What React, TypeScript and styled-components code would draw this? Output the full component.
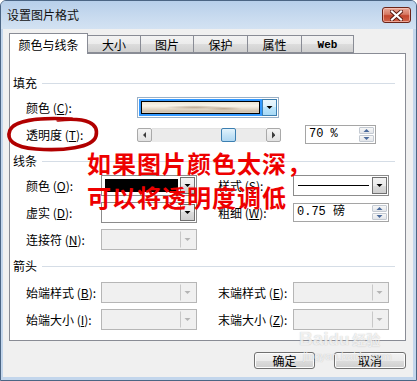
import styled, { createGlobalStyle } from "styled-components";

const UI = `"Noto Sans CJK SC", "Liberation Sans", sans-serif`;
const MONO = `"Liberation Mono", "Noto Sans CJK SC", monospace`;

const GlobalStyle = createGlobalStyle`
  html, body { margin: 0; padding: 0; background: #ffffff; }
  body { font-family: ${UI}; }
  * { box-sizing: border-box; }
`;

// 작은 삼각형 아이콘
const Tri = ({ dir, color, size = 5 }: { dir: "up" | "down" | "left" | "right"; color: string; size?: number }) => {
    const pts = {
        down: "0,0 8,0 4,4",
        up: "0,4 8,4 4,0",
        left: "4,0 4,8 0,4",
        right: "0,0 0,8 4,4",
    }[dir];
    const horizontal = dir === "left" || dir === "right";
    return (
        <svg width={horizontal ? size * 0.5 + 0.5 : size + 2} height={horizontal ? size + 2 : size * 0.5 + 0.5} viewBox={horizontal ? "0 0 4 8" : "0 0 8 4"}>
            <polygon points={pts} fill={color} />
        </svg>
    );
};

const App = () => {
    return (
        <>
            <GlobalStyle />
            <Window>
                <TitleBar>
                    <Title>设置图片格式</Title>
                    <CloseBtn>
                        <svg width="13" height="11" viewBox="0 0 13 11">
                            <path d="M2 1.5 L11 9.5 M11 1.5 L2 9.5" stroke="#5a1a10" strokeWidth="4" strokeLinecap="square" />
                            <path d="M2 1.5 L11 9.5 M11 1.5 L2 9.5" stroke="#ffffff" strokeWidth="2.2" strokeLinecap="square" />
                        </svg>
                    </CloseBtn>
                </TitleBar>
                <Client>
                    <TabRow>
                        <Tab $active $w={79}>颜色与线条</Tab>
                        <Tab $w={54}>大小</Tab>
                        <Tab $w={54}>图片</Tab>
                        <Tab $w={55}>保护</Tab>
                        <Tab $w={55}>属性</Tab>
                        <Tab $w={53} $mono>Web</Tab>
                    </TabRow>
                    <Panel>
                        {/* 填充 */}
                        <Heading>填充</Heading>
                        <Rows $top={7}>
                            <FillRow>
                                <Label>颜色 (<u>C</u>):</Label>
                                <ComboBox $w={142} $focused>
                                    <ComboField $pad={2} $bg="#3399ff">
                                        <Swatch />
                                    </ComboField>
                                    <DropButton $kind="blue"><Tri dir="down" color="#000" /></DropButton>
                                </ComboBox>
                            </FillRow>
                            <FillRow>
                                <Label>透明度 (<u>T</u>):</Label>
                                <Slider>
                                    <SlideBtn><Tri dir="left" color="#3c3c3c" size={6} /></SlideBtn>
                                    <Track>
                                        <Thumb style={{ marginLeft: 69 }} />
                                    </Track>
                                    <SlideBtn><Tri dir="right" color="#3c3c3c" size={6} /></SlideBtn>
                                </Slider>
                                <span />
                                <SpinBox $w={71}>
                                    <SpinText>70 %</SpinText>
                                    <SpinButtons>
                                        <SpinHalf><Tri dir="up" color="#4a6a9c" /></SpinHalf>
                                        <SpinHalf><Tri dir="down" color="#4a6a9c" /></SpinHalf>
                                    </SpinButtons>
                                </SpinBox>
                            </FillRow>
                        </Rows>

                        {/* 线条 */}
                        <Heading $top={9}>线条</Heading>
                        <Rows $top={7}>
                            <LineRow>
                                <Label>颜色 (<u>O</u>):</Label>
                                <ComboBox $w={96}>
                                    <ComboField $pad={2} $bg="#ffffff">
                                        <BlackFill />
                                    </ComboField>
                                    <DropButton $kind="gray"><Tri dir="down" color="#000" /></DropButton>
                                </ComboBox>
                                <span />
                                <Label>样式 (<u>S</u>):</Label>
                                <ComboBox $w={96}>
                                    <ComboField $pad={3} $bg="#ffffff">
                                        <LineSample />
                                    </ComboField>
                                    <DropButton $kind="gray"><Tri dir="down" color="#000" /></DropButton>
                                </ComboBox>
                            </LineRow>
                            <LineRow>
                                <Label>虚实 (<u>D</u>):</Label>
                                <ComboBox $w={96}>
                                    <ComboField $pad={2} $bg="#ffffff" />
                                    <DropButton $kind="gray"><Tri dir="down" color="#000" /></DropButton>
                                </ComboBox>
                                <span />
                                <Label>粗细 (<u>W</u>):</Label>
                                <SpinBox $w={96}>
                                    <SpinText>0.75 磅</SpinText>
                                    <SpinButtons>
                                        <SpinHalf><Tri dir="up" color="#4a6a9c" /></SpinHalf>
                                        <SpinHalf><Tri dir="down" color="#4a6a9c" /></SpinHalf>
                                    </SpinButtons>
                                </SpinBox>
                            </LineRow>
                            <LineRow>
                                <Label>连接符 (<u>N</u>):</Label>
                                <ComboBox $w={96} $disabled>
                                    <ComboField $pad={2} $bg="#f0f0f0" />
                                    <DropButton $kind="disabled"><Tri dir="down" color="#b4b4b4" /></DropButton>
                                </ComboBox>
                            </LineRow>
                        </Rows>

                        {/* 箭头 */}
                        <Heading $top={9}>箭头</Heading>
                        <Rows $top={9}>
                            <LineRow>
                                <Label>始端样式 (<u>B</u>):</Label>
                                <ComboBox $w={96} $disabled>
                                    <ComboField $pad={2} $bg="#f0f0f0" />
                                    <DropButton $kind="disabled"><Tri dir="down" color="#b4b4b4" /></DropButton>
                                </ComboBox>
                                <span />
                                <Label>末端样式 (<u>E</u>):</Label>
                                <ComboBox $w={96} $disabled>
                                    <ComboField $pad={2} $bg="#f0f0f0" />
                                    <DropButton $kind="disabled"><Tri dir="down" color="#b4b4b4" /></DropButton>
                                </ComboBox>
                            </LineRow>
                            <LineRow>
                                <Label>始端大小 (<u>I</u>):</Label>
                                <ComboBox $w={96} $disabled>
                                    <ComboField $pad={2} $bg="#f0f0f0" />
                                    <DropButton $kind="disabled"><Tri dir="down" color="#b4b4b4" /></DropButton>
                                </ComboBox>
                                <span />
                                <Label>末端大小 (<u>Z</u>):</Label>
                                <ComboBox $w={96} $disabled>
                                    <ComboField $pad={2} $bg="#f0f0f0" />
                                    <DropButton $kind="disabled"><Tri dir="down" color="#b4b4b4" /></DropButton>
                                </ComboBox>
                            </LineRow>
                        </Rows>
                    </Panel>
                    <ButtonRow>
                        <DialogButton $w={61}>确定</DialogButton>
                        <DialogButton $w={72}>取消</DialogButton>
                    </ButtonRow>
                </Client>

                {/* 붉은 주석 */}
                <Circle width="110" height="50" viewBox="0 114 110 50">
                    <path
                        d="M58 120 C88 117 99 124 96 136 C93 148 62 151 36 149 C13 147 6 140 10 130 C14 121 36 117 72 119"
                        fill="none" stroke="#b10000" strokeWidth="3.6" strokeLinecap="round" />
                </Circle>
                <Note>
                    如果图片颜色太深，<br />
                    可以将透明度调低
                </Note>
                <Watermark>
                    <WmBig>Bai<Paw>du</Paw><WmCn>经验</WmCn></WmBig>
                    <WmSmall>jingyan.baidu.com</WmSmall>
                </Watermark>
            </Window>
        </>
    );
};

export default App;

const Window = styled.div`
    position: relative;
    width: 417px;
    height: 381px;
    display: flex;
    flex-direction: column;
    background: #c3d6ec;
    border: 1px solid #4b6584;
    border-radius: 6px 6px 0 0;
    overflow: hidden;
    font-family: ${UI};
    font-size: 12px;
    color: #000;
`;

const TitleBar = styled.div`
    height: 28px;
    flex: none;
    display: flex;
    align-items: flex-start;
    justify-content: space-between;
    padding-left: 6px;
    background: linear-gradient(#b7cfea, #c9dbef 60%, #d3e2f2);
`;

const Title = styled.div`
    margin-top: 6px;
    font-size: 12px;
    line-height: 16px;
    color: #111;
`;

const CloseBtn = styled.div`
    margin-top: 6px;
    margin-right: 5px;
    width: 29px;
    height: 16px;
    border: 1px solid #6b2418;
    border-radius: 3px;
    background: linear-gradient(#e9a898, #d67a64 45%, #c3462d 55%, #d0654c);
    box-shadow: inset 0 0 0 1px rgba(255, 210, 200, 0.6);
    display: flex;
    align-items: center;
    justify-content: center;
`;

const Client = styled.div`
    flex: 1;
    margin: 0 3px 3px 2px;
    background: #f0f0f0;
    padding: 4px 7px 8px 6px;
    display: flex;
    flex-direction: column;
`;

const TabRow = styled.div`
    height: 20px;
    display: flex;
    align-items: flex-end;
    position: relative;
    z-index: 1;
`;

const Tab = styled.div<{ $active?: boolean; $w: number; $mono?: boolean }>`
    width: ${(p) => p.$w}px;
    height: ${(p) => (p.$active ? 21 : 18)}px;
    margin-bottom: ${(p) => (p.$active ? -1 : 0)}px;
    margin-right: -1px;
    border: 1px solid #898c95;
    border-bottom: ${(p) => (p.$active ? "none" : "1px solid #898c95")};
    background: ${(p) => (p.$active ? "#ffffff" : "linear-gradient(#f3f3f3, #ebebeb 50%, #dddddd 50%, #cfcfcf)")};
    display: flex;
    align-items: center;
    justify-content: center;
    padding-top: ${(p) => (p.$active ? 1 : 1)}px;
    font-family: ${(p) => (p.$mono ? MONO : UI)};
    font-size: ${(p) => (p.$mono ? 11 : 12)}px;
    font-weight: ${(p) => (p.$mono ? 700 : 400)};
    line-height: 14px;
    color: #000;
    position: relative;
    z-index: ${(p) => (p.$active ? 2 : 1)};
`;

const Panel = styled.div`
    height: 288px;
    flex: none;
    background: #ffffff;
    border: 1px solid #898c95;
    padding: 22px 10px 0 3px;
`;

const Heading = styled.div<{ $top?: number }>`
    margin-top: ${(p) => p.$top ?? 0}px;
    height: 14px;
    display: flex;
    align-items: center;
    gap: 5px;
    line-height: 14px;

    &::after {
        content: "";
        flex: 1;
        height: 1px;
        background: #d5dde6;
    }
`;

const Rows = styled.div<{ $top: number }>`
    margin-top: ${(p) => p.$top}px;
    padding-left: 13px;
    display: flex;
    flex-direction: column;
    gap: 6px;
`;

const FillRow = styled.div`
    height: 21px;
    display: grid;
    grid-template-columns: 111px 144px 24px 71px;
    align-items: center;
`;

const LineRow = styled.div`
    height: 21px;
    display: grid;
    grid-template-columns: 75px 96px 21px 75px 96px;
    align-items: center;
`;

const Label = styled.div`
    white-space: nowrap;
    line-height: 21px;
    font-size: 12px;

    u {
        text-decoration-thickness: 1px;
        text-underline-offset: 1px;
    }
`;

const ComboBox = styled.div<{ $w: number; $disabled?: boolean; $focused?: boolean }>`
    width: ${(p) => p.$w}px;
    height: 21px;
    display: flex;
    padding: 1px;
    border: 1px solid ${(p) => (p.$disabled ? "#b6b6b6" : p.$focused ? "#9ab0c6" : "#8c8c8c")};
    background: ${(p) => (p.$disabled ? "#f0f0f0" : "#ffffff")};
`;

const ComboField = styled.div<{ $pad: number; $bg: string }>`
    flex: 1;
    padding: ${(p) => p.$pad}px;
    background: ${(p) => p.$bg};
    display: flex;
    flex-direction: column;
    justify-content: center;
`;

const Swatch = styled.div`
    flex: 1;
    border: 1px solid #000;
    background:
        radial-gradient(ellipse 30px 2px at 45% 48%, rgba(150, 120, 90, 0.55), transparent),
        radial-gradient(ellipse 18px 2px at 70% 60%, rgba(150, 120, 90, 0.5), transparent),
        linear-gradient(#efe6d3, #f9f4ea 35%, #e8ddcc 60%, #cfc1ad 85%, #ddd2c3);
`;

const BlackFill = styled.div`
    flex: 1;
    background: #000;
`;

const LineSample = styled.div`
    height: 1px;
    background: #000;
`;

const DropButton = styled.div<{ $kind: "blue" | "gray" | "disabled" }>`
    width: 15px;
    flex: none;
    display: flex;
    align-items: center;
    justify-content: center;
    border: 1px solid ${(p) => (p.$kind === "blue" ? "#3c7fb1" : p.$kind === "gray" ? "#707070" : "transparent")};
    border-left: 1px solid ${(p) => (p.$kind === "blue" ? "#3c7fb1" : p.$kind === "gray" ? "#707070" : "#c8c8c8")};
    background: ${(p) =>
        p.$kind === "blue"
            ? "linear-gradient(#eaf6fd, #d9f0fc 50%, #bee6fd 50%, #a7d9f5)"
            : p.$kind === "gray"
                ? "linear-gradient(#f2f2f2, #ebebeb 50%, #dddddd 50%, #cfcfcf)"
                : "#f0f0f0"};
`;

const Slider = styled.div`
    width: 144px;
    height: 14px;
    display: flex;
`;

const SlideBtn = styled.div`
    width: 15px;
    height: 14px;
    flex: none;
    border: 1px solid #a9a9a9;
    border-radius: 2px;
    background: linear-gradient(#f4f4f4, #e2e2e2);
    display: flex;
    align-items: center;
    justify-content: center;
`;

const Track = styled.div`
    flex: 1;
    height: 14px;
    background: #ebebeb;
    border-top: 1px solid #e2e2e2;
    display: flex;
    align-items: center;
`;

const Thumb = styled.div`
    width: 15px;
    height: 14px;
    border: 1px solid #3c7fb1;
    border-radius: 2px;
    background: linear-gradient(#e3f3fc, #c6e4f7 50%, #afd7f2);
`;

const SpinBox = styled.div<{ $w: number }>`
    width: ${(p) => p.$w}px;
    height: 19px;
    display: flex;
    border: 1px solid #a5a5a5;
    background: #fff;
    padding: 1px;
`;

const SpinText = styled.div`
    flex: 1;
    padding-left: 2px;
    font-family: ${MONO};
    font-size: 12px;
    line-height: 15px;
    white-space: nowrap;
`;

const SpinButtons = styled.div`
    width: 15px;
    display: flex;
    flex-direction: column;
    gap: 1px;
`;

const SpinHalf = styled.div`
    flex: 1;
    border: 1px solid #c4cad2;
    border-radius: 1px;
    background: linear-gradient(#f7f7f7, #e3e6ea);
    display: flex;
    align-items: center;
    justify-content: center;
`;

const ButtonRow = styled.div`
    margin-top: 11px;
    display: flex;
    justify-content: flex-end;
    gap: 19px;
`;

const DialogButton = styled.button<{ $w: number }>`
    width: ${(p) => p.$w}px;
    height: 17px;
    padding: 0;
    border: 1px solid #707070;
    border-radius: 3px;
    background: linear-gradient(#f2f2f2, #ebebeb 50%, #dddddd 50%, #cfcfcf);
    box-shadow: inset 0 0 0 1px #fcfcfc;
    font-family: ${UI};
    font-size: 12px;
    line-height: 14px;
    color: #000;
`;

const Circle = styled.svg`
    position: absolute;
    left: -1px;
    top: 113px;
    pointer-events: none;
`;

const Note = styled.div`
    position: absolute;
    left: 86px;
    top: 145px;
    font-family: ${UI};
    font-weight: 700;
    font-size: 24px;
    letter-spacing: 1px;
    line-height: 34px;
    color: #ee0000;
    white-space: nowrap;
    pointer-events: none;
`;

const Watermark = styled.div`
    position: absolute;
    left: 298px;
    top: 328px;
    display: flex;
    flex-direction: column;
    align-items: flex-start;
    color: rgba(255, 255, 255, 0.75);
    text-shadow: 0 0 1px rgba(110, 110, 110, 0.45);
    pointer-events: none;
`;

const WmBig = styled.div`
    font-family: "Liberation Sans", sans-serif;
    font-weight: 700;
    font-size: 19px;
    line-height: 20px;
    display: flex;
    align-items: baseline;
`;

const Paw = styled.span`
    font-size: 17px;
`;

const WmCn = styled.span`
    margin-left: 3px;
    font-family: ${UI};
    font-size: 14px;
`;

const WmSmall = styled.div`
    margin-left: 4px;
    font-family: "Liberation Sans", sans-serif;
    font-size: 11px;
    line-height: 12px;
`;
